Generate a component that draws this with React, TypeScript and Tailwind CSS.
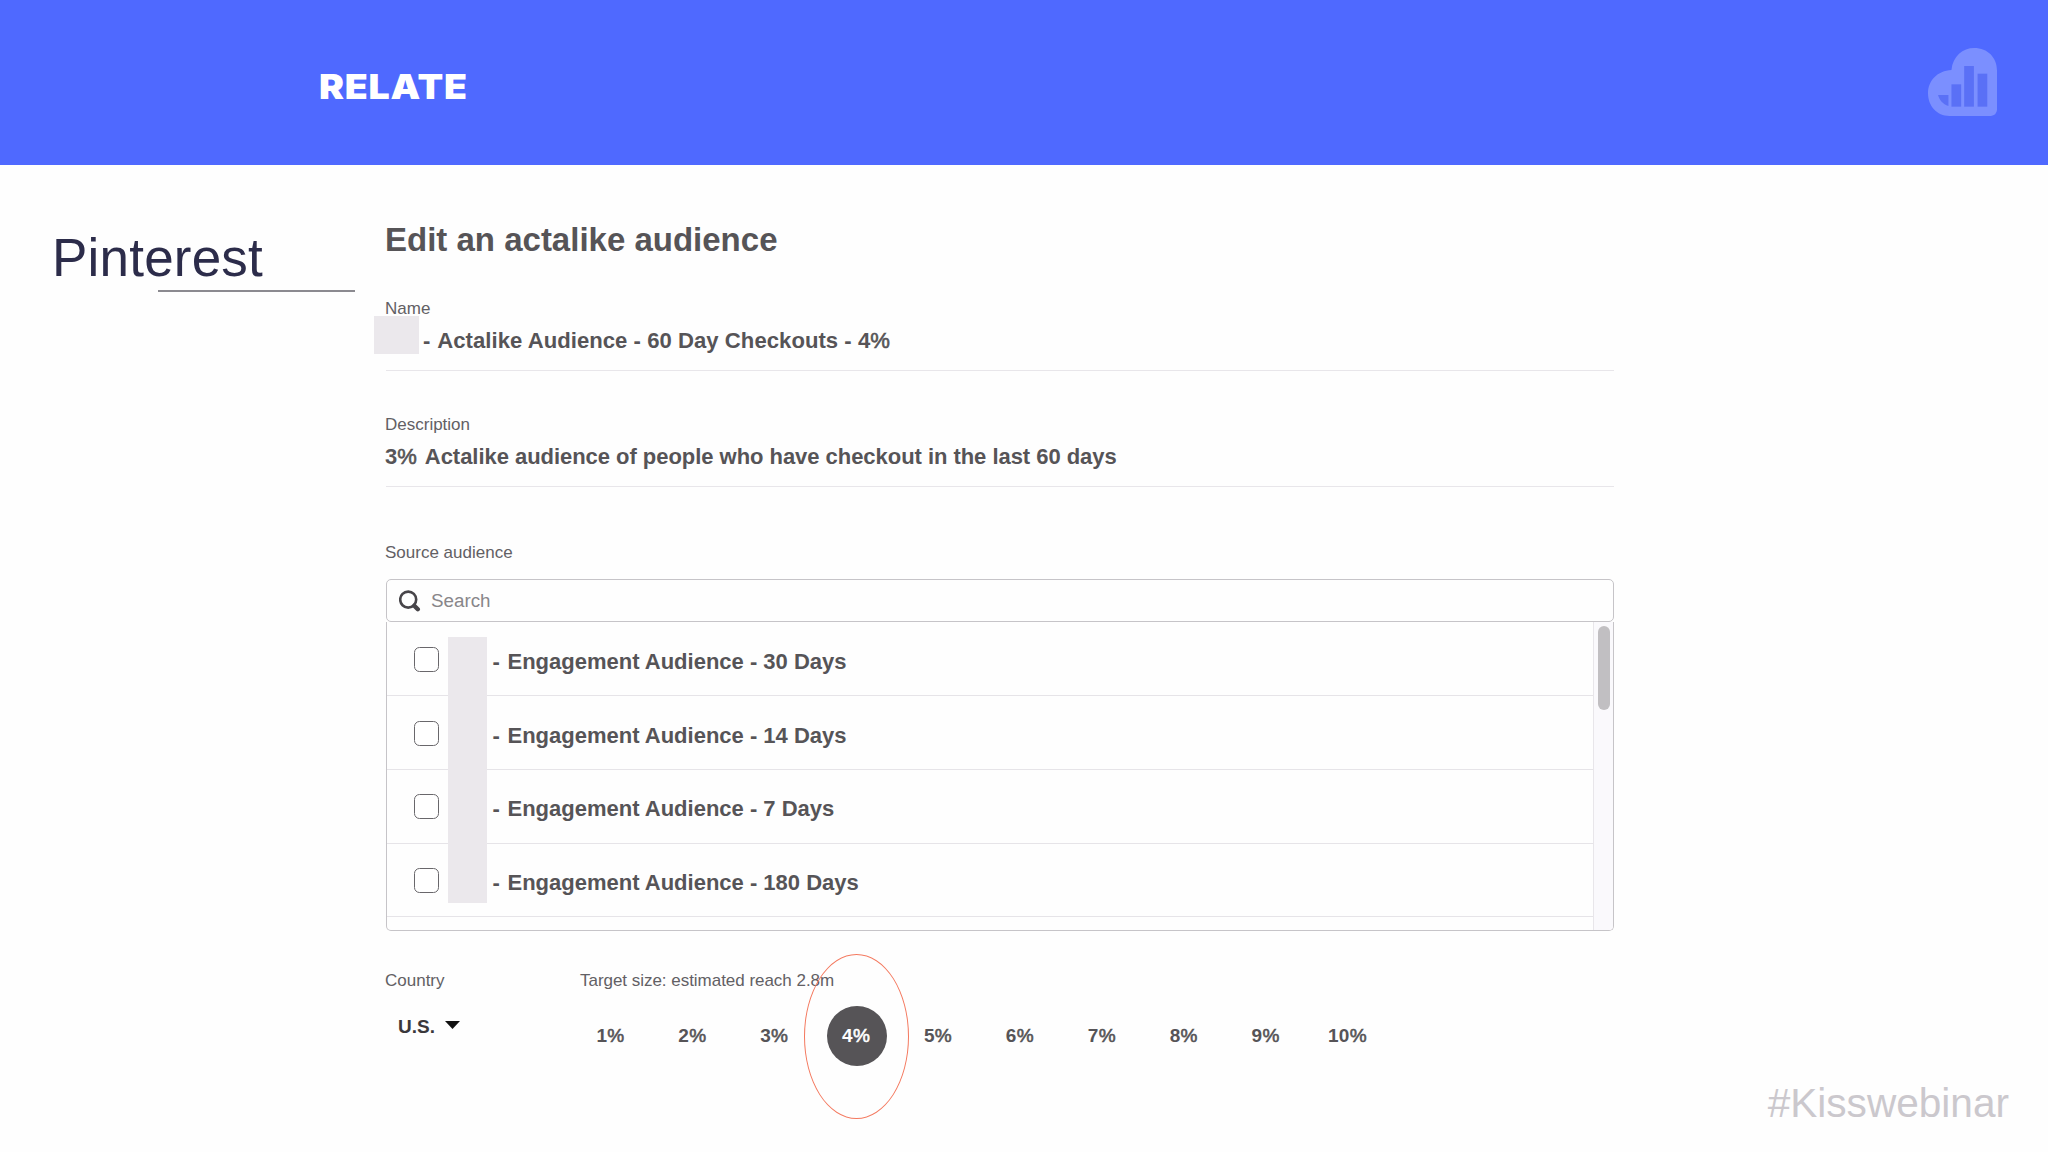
import React from "react";

const audiences = [
  { label: "Engagement Audience - 30 Days", row: "h-[73px] pt-6" },
  { label: "Engagement Audience - 14 Days", row: "h-[74px] pt-[25px]" },
  { label: "Engagement Audience - 7 Days", row: "h-[74px] pt-6" },
  { label: "Engagement Audience - 180 Days", row: "h-[73px] pt-6" },
];

const sizes = [1, 2, 3, 4, 5, 6, 7, 8, 9, 10];

function Logo() {
  return (
    <svg className="h-[68px] w-[69px]" viewBox="84 54 206 204" preserveAspectRatio="none">
      <path
        fill="#7b8fff"
        d="M154 120C158 78 188 54 222 54C262 54 290 82 290 122V240Q288 256 272 258H148C110 258 84 228 84 190C84 152 112 122 154 120Z"
      />
      <g fill="#5a70f6">
        <path d="M114 195H145V228C128 222 118 210 114 195Z" />
        <path d="M154 163H183V230H154Z" />
        <path d="M192 108H221V230H192Z" />
        <path d="M232 131H261V230H232Z" />
      </g>
    </svg>
  );
}

function Label({ children }: { children: React.ReactNode }) {
  return <div className="text-[17px] leading-5 whitespace-nowrap text-[#626064]">{children}</div>;
}

function Percent() {
  return <span className="font-normal [-webkit-text-stroke:0.6px_currentColor]">%</span>;
}

export default function App() {
  return (
    <div className="flex h-[1152px] w-[2048px] flex-col overflow-hidden bg-[#fefefe] font-['Liberation_Sans',Arial,sans-serif]">
      <header className="flex h-[165px] shrink-0 items-start justify-between bg-[#4f69ff] pr-[51px] pl-[319px]">
        <h1 className="mt-[67px] origin-left scale-x-[1.09] font-['Inter',sans-serif] text-[34.4px] leading-10 font-black tracking-[0.7px] text-white">
          RELATE
        </h1>
        <div className="mt-12">
          <Logo />
        </div>
      </header>

      <main className="flex h-[914px] shrink-0">
        <aside className="w-[386px] shrink-0">
          <h2 className="mt-[63px] ml-[52px] text-[53px] leading-[60px] tracking-[0.2px] text-[#2c2c4a]">Pinterest</h2>
          <div className="mt-[2px] ml-[158px] h-[2px] w-[197px] bg-[#8b8a90]" />
        </aside>

        <section className="w-[1228px] text-[#565457]">
          <h3 className="mt-[55px] -ml-px text-[33px] leading-10 font-bold">Edit an actalike audience</h3>

          <div className="relative mt-[39px] border-b border-[#e8e6ea] pb-[15px]">
            <div className="-ml-px">
              <Label>Name</Label>
            </div>
            <div className="absolute top-[17px] -left-3 h-[38px] w-[45px] bg-[#ebe8ec]" />
            <div className="mt-2 ml-[37px] text-[22.1px] leading-7 font-bold tracking-[0.04px]">
              <span className="mr-[1.5px]">-</span> Actalike Audience - 60 Day Checkouts - 4<Percent />
            </div>
          </div>

          <div className="mt-11 border-b border-[#e8e6ea] pb-[15px]">
            <div className="-ml-px">
              <Label>Description</Label>
            </div>
            <div className="mt-2 -ml-px text-[22px] leading-7 font-bold tracking-[-0.04px]">
              3<Percent /> <span className="ml-[2px]">Actalike audience of people who have checkout in the last 60 days</span>
            </div>
          </div>

          <div className="mt-14 -ml-px">
            <Label>Source audience</Label>
          </div>

          <div className="mt-4 flex h-[43px] items-center rounded-[5px] border border-[#c6c4c8] pl-3">
            <svg className="h-[22px] w-[22px]" viewBox="0 0 22 22" fill="none" stroke="#474549">
              <circle cx="9.2" cy="9.6" r="8" strokeWidth="2.6" />
              <path d="M15.3 15.7L18.8 19.2" strokeWidth="4.4" strokeLinecap="round" />
            </svg>
            <span className="ml-[10px] text-[18.8px] leading-6 text-[#88868a]">Search</span>
          </div>

          <div className="relative flex h-[309px] overflow-hidden rounded-b-[5px] border-x border-b border-[#c6c4c8] pt-px">
            <div className="flex-1">
              {audiences.map((a) => (
                <div key={a.label} className={`flex items-start border-b border-[#e6e4e8] pl-[27px] ${a.row}`}>
                  <span className="h-[25px] w-[25px] rounded-[5.5px] border-[1.5px] border-[#69676b] bg-white" />
                  <span className="mt-px ml-[53.5px] text-[22px] leading-7 font-bold">
                    <span className="mr-[1.5px]">-</span> {a.label}
                  </span>
                </div>
              ))}
            </div>
            <div className="-mt-px flex w-5 justify-center border-l border-[#e8e6ea] bg-[#faf9fc] pt-1">
              <div className="h-[84px] w-[12px] rounded-full bg-[#c1bfc2]" />
            </div>
            <div className="absolute top-[15px] left-[61px] h-[266px] w-[39px] bg-[#ebe8ec]" />
          </div>

          <div className="mt-10 flex">
            <div className="-ml-px w-[195px]">
              <Label>Country</Label>
              <div className="mt-6 ml-[13px] flex items-start text-[19px] leading-6 font-bold text-[#3a383b]">
                U.S.
                <svg className="mt-[6px] ml-[10px] h-2 w-[15px]" viewBox="0 0 15 8">
                  <path d="M0 0H15L7.5 8Z" fill="#111" />
                </svg>
              </div>
            </div>
            <div>
              <div className="tracking-[-0.03px]">
                <Label>Target size: estimated reach 2.8m</Label>
              </div>
              <div className="mt-[15px] -ml-[10px] flex text-[19px] font-bold tracking-[0.3px]">
                {sizes.map((n) => (
                  <div key={n} className="relative flex w-[81.9px] justify-center">
                    <span
                      className={
                        n === 4
                          ? "flex h-[60px] w-[60px] items-center justify-center rounded-full bg-[#565457] pt-px pr-px text-white"
                          : "flex h-[60px] items-center pt-px pr-px"
                      }
                    >
                      {n}
                      <Percent />
                    </span>
                    {n === 4 && (
                      <span className="absolute -top-[52px] left-[-12px] h-[165px] w-[105px] rounded-[50%] border-[1.5px] border-[#f4795f]" />
                    )}
                  </div>
                ))}
              </div>
            </div>
          </div>
        </section>
      </main>

      <footer className="flex justify-end pr-[39px] text-[40.6px] leading-[48px] text-[#cbc8cd]">#Kisswebinar</footer>
    </div>
  );
}
